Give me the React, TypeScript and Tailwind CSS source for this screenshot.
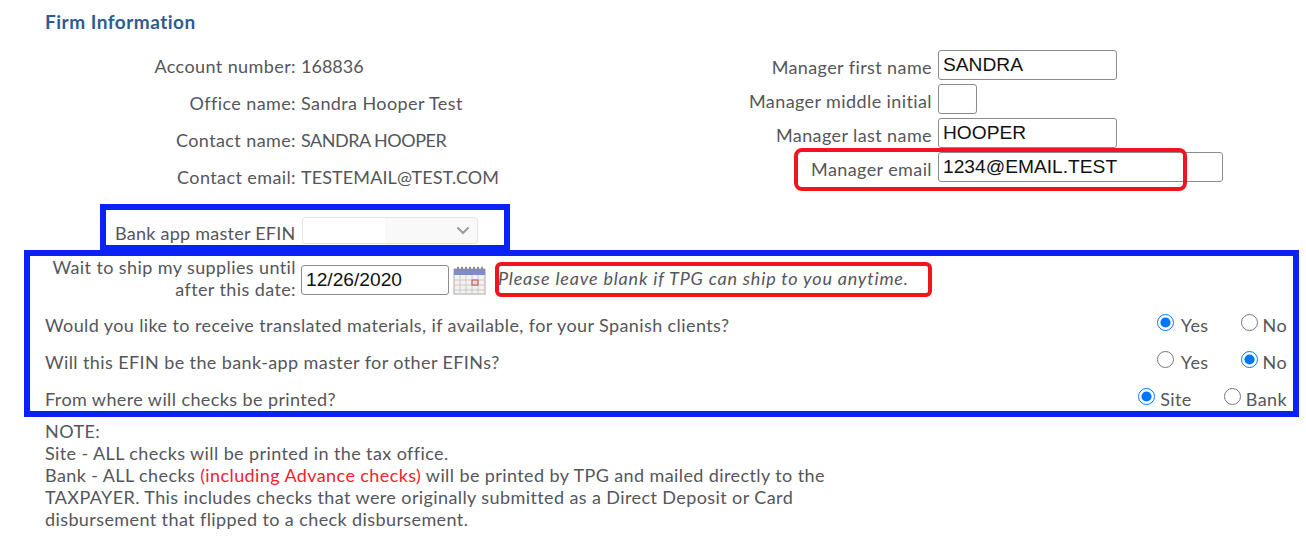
import React from 'react';

const leftRows = [
  { label: 'Account number:', value: '168836', track: 'tracking-normal' },
  { label: 'Office name:', value: 'Sandra Hooper Test', track: 'tracking-[0.4px]' },
  { label: 'Contact name:', value: 'SANDRA HOOPER', track: 'tracking-[-0.5px]' },
  { label: 'Contact email:', value: 'TESTEMAIL@TEST.COM', track: 'tracking-[0.1px]' },
];

const inputClass =
  "h-[30px] rounded-[3px] border border-[#8c8c8c] bg-white px-[4px] font-['Liberation_Sans',sans-serif] text-[19.2px] leading-none tracking-normal text-[#111] outline-none";

function CalendarIcon() {
  return (
    <svg width="35" height="30" viewBox="0 0 35 30" className="shrink-0">
      <rect x="2" y="4" width="31" height="25" fill="#f4f2f0" stroke="#a9a9ad" />
      <rect x="2" y="4" width="31" height="6" fill="#7f8cc9" />
      {[5, 9, 13, 17, 21, 25, 29].map((x) => (
        <rect key={x} x={x} y="1.5" width="2" height="5" rx="1" fill="#8a8a9a" />
      ))}
      {[8, 14, 20, 26].map((x) => (
        <line key={x} x1={x} y1="10" x2={x} y2="29" stroke="#b7d0d6" />
      ))}
      {[15, 20, 25].map((y) => (
        <line key={y} x1="2" y1={y} x2="33" y2={y} stroke="#d8c4bc" />
      ))}
      <rect x="20" y="15" width="6" height="5" fill="#f0d6d0" stroke="#b5524e" />
    </svg>
  );
}

function Radio({ name, label, checked, className }: { name: string; label: string; checked?: boolean; className: string }) {
  return (
    <label className={`flex items-center ${className}`}>
      <input type="radio" name={name} defaultChecked={checked} className="m-0 h-[17px] w-[17px] -translate-y-[2px]" />
      <span>{label}</span>
    </label>
  );
}

function Question({ text, a, b }: { text: string; a: React.ReactNode; b: React.ReactNode }) {
  return (
    <div className="flex h-[37px] items-center justify-between">
      <span>{text}</span>
      <div className="flex items-center">
        {a}
        {b}
      </div>
    </div>
  );
}

export default function App() {
  return (
    <div className="h-[546px] w-[1306px] overflow-hidden bg-white font-['Lato',sans-serif] text-[18px] leading-[22px] tracking-[0.4px] text-[#55565b]">
      <div className="flex h-[204px] pl-[45px]">
        <div className="w-[700px]">
          <h2 className="mt-[11px] text-[19px] font-bold leading-[22px] tracking-[0.5px] text-[#2f5b8f]">Firm Information</h2>
          <div className="mt-[22px] flex flex-col gap-[15px]">
            {leftRows.map((row) => (
              <div key={row.label} className="flex gap-[5px]">
                <span className="w-[251px] text-right">{row.label}</span>
                <span className={row.track}>{row.value}</span>
              </div>
            ))}
          </div>
        </div>
        <div className="flex flex-col gap-[4px] pt-[50px]">
          {[
            { label: 'Manager first name', value: 'SANDRA', w: 'w-[179px]' },
            { label: 'Manager middle initial', value: '', w: 'w-[39px]' },
            { label: 'Manager last name', value: 'HOOPER', w: 'w-[179px]' },
          ].map((row) => (
            <div key={row.label} className="flex items-center gap-[6px]">
              <span className="mt-[4px] w-[187px] whitespace-nowrap text-right">{row.label}</span>
              <input readOnly value={row.value} className={`${inputClass} ${row.w}`} />
            </div>
          ))}
          <div className="relative flex items-center gap-[6px]">
            <span className="mt-[4px] w-[187px] text-right">Manager email</span>
            <input readOnly value="1234@EMAIL.TEST" className={`${inputClass} w-[285px]`} />
            <div className="absolute left-[49px] top-[-4px] h-[43px] w-[393px] rounded-[8px] border-[4px] border-[#f0141e]" />
          </div>
        </div>
      </div>

      <div className="ml-[100px] flex h-[47px] w-[410px] items-end border-[6px] border-[#0a22f5] pl-[9px]">
        <span className="mb-[1px] w-[181px] whitespace-nowrap tracking-[0.25px]">Bank app master EFIN</span>
        <div className="mb-[1px] ml-[6px] flex h-[27px] w-[176px] items-center justify-end rounded-[3px] border border-[#e6e6e6] bg-gradient-to-r from-white from-[47%] to-[#f9f9f9] to-[47%] pr-[7px]">
          <svg width="14" height="9" viewBox="0 0 14 9" fill="none">
            <path d="M1.5 1.5 7 7l5.5-5.5" stroke="#9a9a9a" strokeWidth="2" />
          </svg>
        </div>
      </div>

      <div className="ml-[24px] -mt-[1px] h-[167px] w-[1275px] border-[6px] border-[#0a22f5] pl-[15px] pr-[6px]">
        <div className="flex h-[50px] items-start">
          <span className="w-[251px] text-right">
            Wait to ship my supplies until
            <br />
            after this date:
          </span>
          <input readOnly value="12/26/2020" className={`${inputClass} ml-[5px] mt-[9px] w-[148px]`} />
          <div className="ml-[3px] mt-[9px]">
            <CalendarIcon />
          </div>
          <div className="relative ml-[11px] mt-[11px] whitespace-nowrap italic tracking-[0.8px]">
            Please leave blank if TPG can ship to you anytime.
            <div className="absolute left-[-3px] top-[-5px] h-[35px] w-[437px] rounded-[6px] border-[4px] border-[#f0141e]" />
          </div>
        </div>
        <Question
          text="Would you like to receive translated materials, if available, for your Spanish clients?"
          a={<Radio name="spanish" label="Yes" checked className="gap-[7px]" />}
          b={<Radio name="spanish" label="No" className="ml-[32px] gap-[5px]" />}
        />
        <Question
          text="Will this EFIN be the bank-app master for other EFINs?"
          a={<Radio name="master" label="Yes" className="gap-[7px]" />}
          b={<Radio name="master" label="No" checked className="ml-[32px] gap-[5px]" />}
        />
        <Question
          text="From where will checks be printed?"
          a={<Radio name="checks" label="Site" checked className="gap-[5px]" />}
          b={<Radio name="checks" label="Bank" className="ml-[32px] gap-[5px]" />}
        />
      </div>

      <div className="ml-[45px] mt-[3px] w-[790px] leading-[22px]">
        <p>NOTE:</p>
        <p>Site - ALL checks will be printed in the tax office.</p>
        <p>
          Bank - ALL checks <span className="text-[#f5222d]">(including Advance checks)</span> will be printed by TPG and mailed directly to the
          <br />
          TAXPAYER. This includes checks that were originally submitted as a Direct Deposit or Card
          <br />
          disbursement that flipped to a check disbursement.
        </p>
      </div>
    </div>
  );
}
